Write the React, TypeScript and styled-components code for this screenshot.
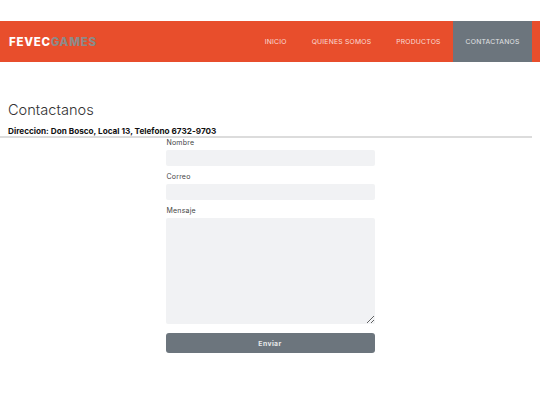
import React from "react";
import styled, { createGlobalStyle } from "styled-components";

const Global = createGlobalStyle`
  html, body { margin: 0; padding: 0; background: #fff; }
  body { font-family: "Inter", "Open Sans", sans-serif; color: #212529; }
  * { box-sizing: border-box; }
`;

const Header = styled.header`
  margin-top: 21px;
  height: 41px;
  background: #e84e2c;
  display: flex;
  align-items: stretch;
  justify-content: space-between;
  padding: 0 8px 0 9px;
`;

const Brand = styled.div`
  display: flex;
  align-items: center;
  font-size: 11.5px;
  font-weight: 800;
  letter-spacing: 0.7px;
`;

const BrandPart = styled.span<{ $muted?: boolean }>`
  color: ${(p) => (p.$muted ? "#8e8a88" : "#ffffff")};
`;

const Nav = styled.nav`
  display: flex;
  align-items: stretch;
`;

const NavItem = styled.a<{ $active?: boolean }>`
  display: flex;
  align-items: center;
  padding: 0 12.5px;
  font-size: 6.8px;
  letter-spacing: 0.2px;
  text-transform: uppercase;
  text-decoration: none;
  color: ${(p) => (p.$active ? "#e4e6e8" : "rgba(255,255,255,0.8)")};
  background: ${(p) => (p.$active ? "#6c757d" : "transparent")};
`;

const Intro = styled.section`
  padding: 0 8px;
  margin-top: 38px;
`;

const Title = styled.h2`
  margin: 0;
  font-size: 14.6px;
  line-height: 20px;
  font-weight: 300;
  color: #333;
`;

const Address = styled.p`
  margin: 7px 0 0;
  font-size: 8.2px;
  line-height: 8px;
  font-weight: 700;
  color: #111;
`;

const Rule = styled.hr`
  margin: 1px 8px 0 0;
  border: 0;
  height: 2px;
  background: #dcdcdc;
`;

const Form = styled.form`
  width: 209px;
  margin: 0 auto;
  display: flex;
  flex-direction: column;
`;

const Label = styled.label`
  font-size: 7px;
  line-height: 9px;
  color: #444;
  padding-left: 1px;
  margin-bottom: 3px;
  letter-spacing: 0.2px;
`;

const Input = styled.input`
  height: 16px;
  border: 0;
  border-radius: 2px;
  background: #f1f2f4;
  margin-bottom: 6px;
`;

const TextArea = styled.textarea`
  height: 106px;
  border: 0;
  border-radius: 2px;
  background: #f1f2f4;
  resize: vertical;
  margin: 0 0 9px;
`;

const Button = styled.button`
  height: 20px;
  border: 0;
  border-radius: 3px;
  background: #6c757d;
  color: #e8e9ea;
  font-family: inherit;
  font-size: 6.8px;
  font-weight: 700;
  letter-spacing: 0.4px;
`;

export default function App() {
  return (
    <>
      <Global />
      <Header>
        <Brand>
          <BrandPart>FEVEC</BrandPart>
          <BrandPart $muted>GAMES</BrandPart>
        </Brand>
        <Nav>
          <NavItem>Inicio</NavItem>
          <NavItem>Quienes Somos</NavItem>
          <NavItem>Productos</NavItem>
          <NavItem $active>Contactanos</NavItem>
        </Nav>
      </Header>
      <Intro>
        <Title>Contactanos</Title>
        <Address>Direccion: Don Bosco, Local 13, Telefono 6732-9703</Address>
      </Intro>
      <Rule />
      <Form onSubmit={(e) => e.preventDefault()}>
        <Label>Nombre</Label>
        <Input type="text" />
        <Label>Correo</Label>
        <Input type="email" />
        <Label>Mensaje</Label>
        <TextArea />
        <Button type="submit">Enviar</Button>
      </Form>
    </>
  );
}
